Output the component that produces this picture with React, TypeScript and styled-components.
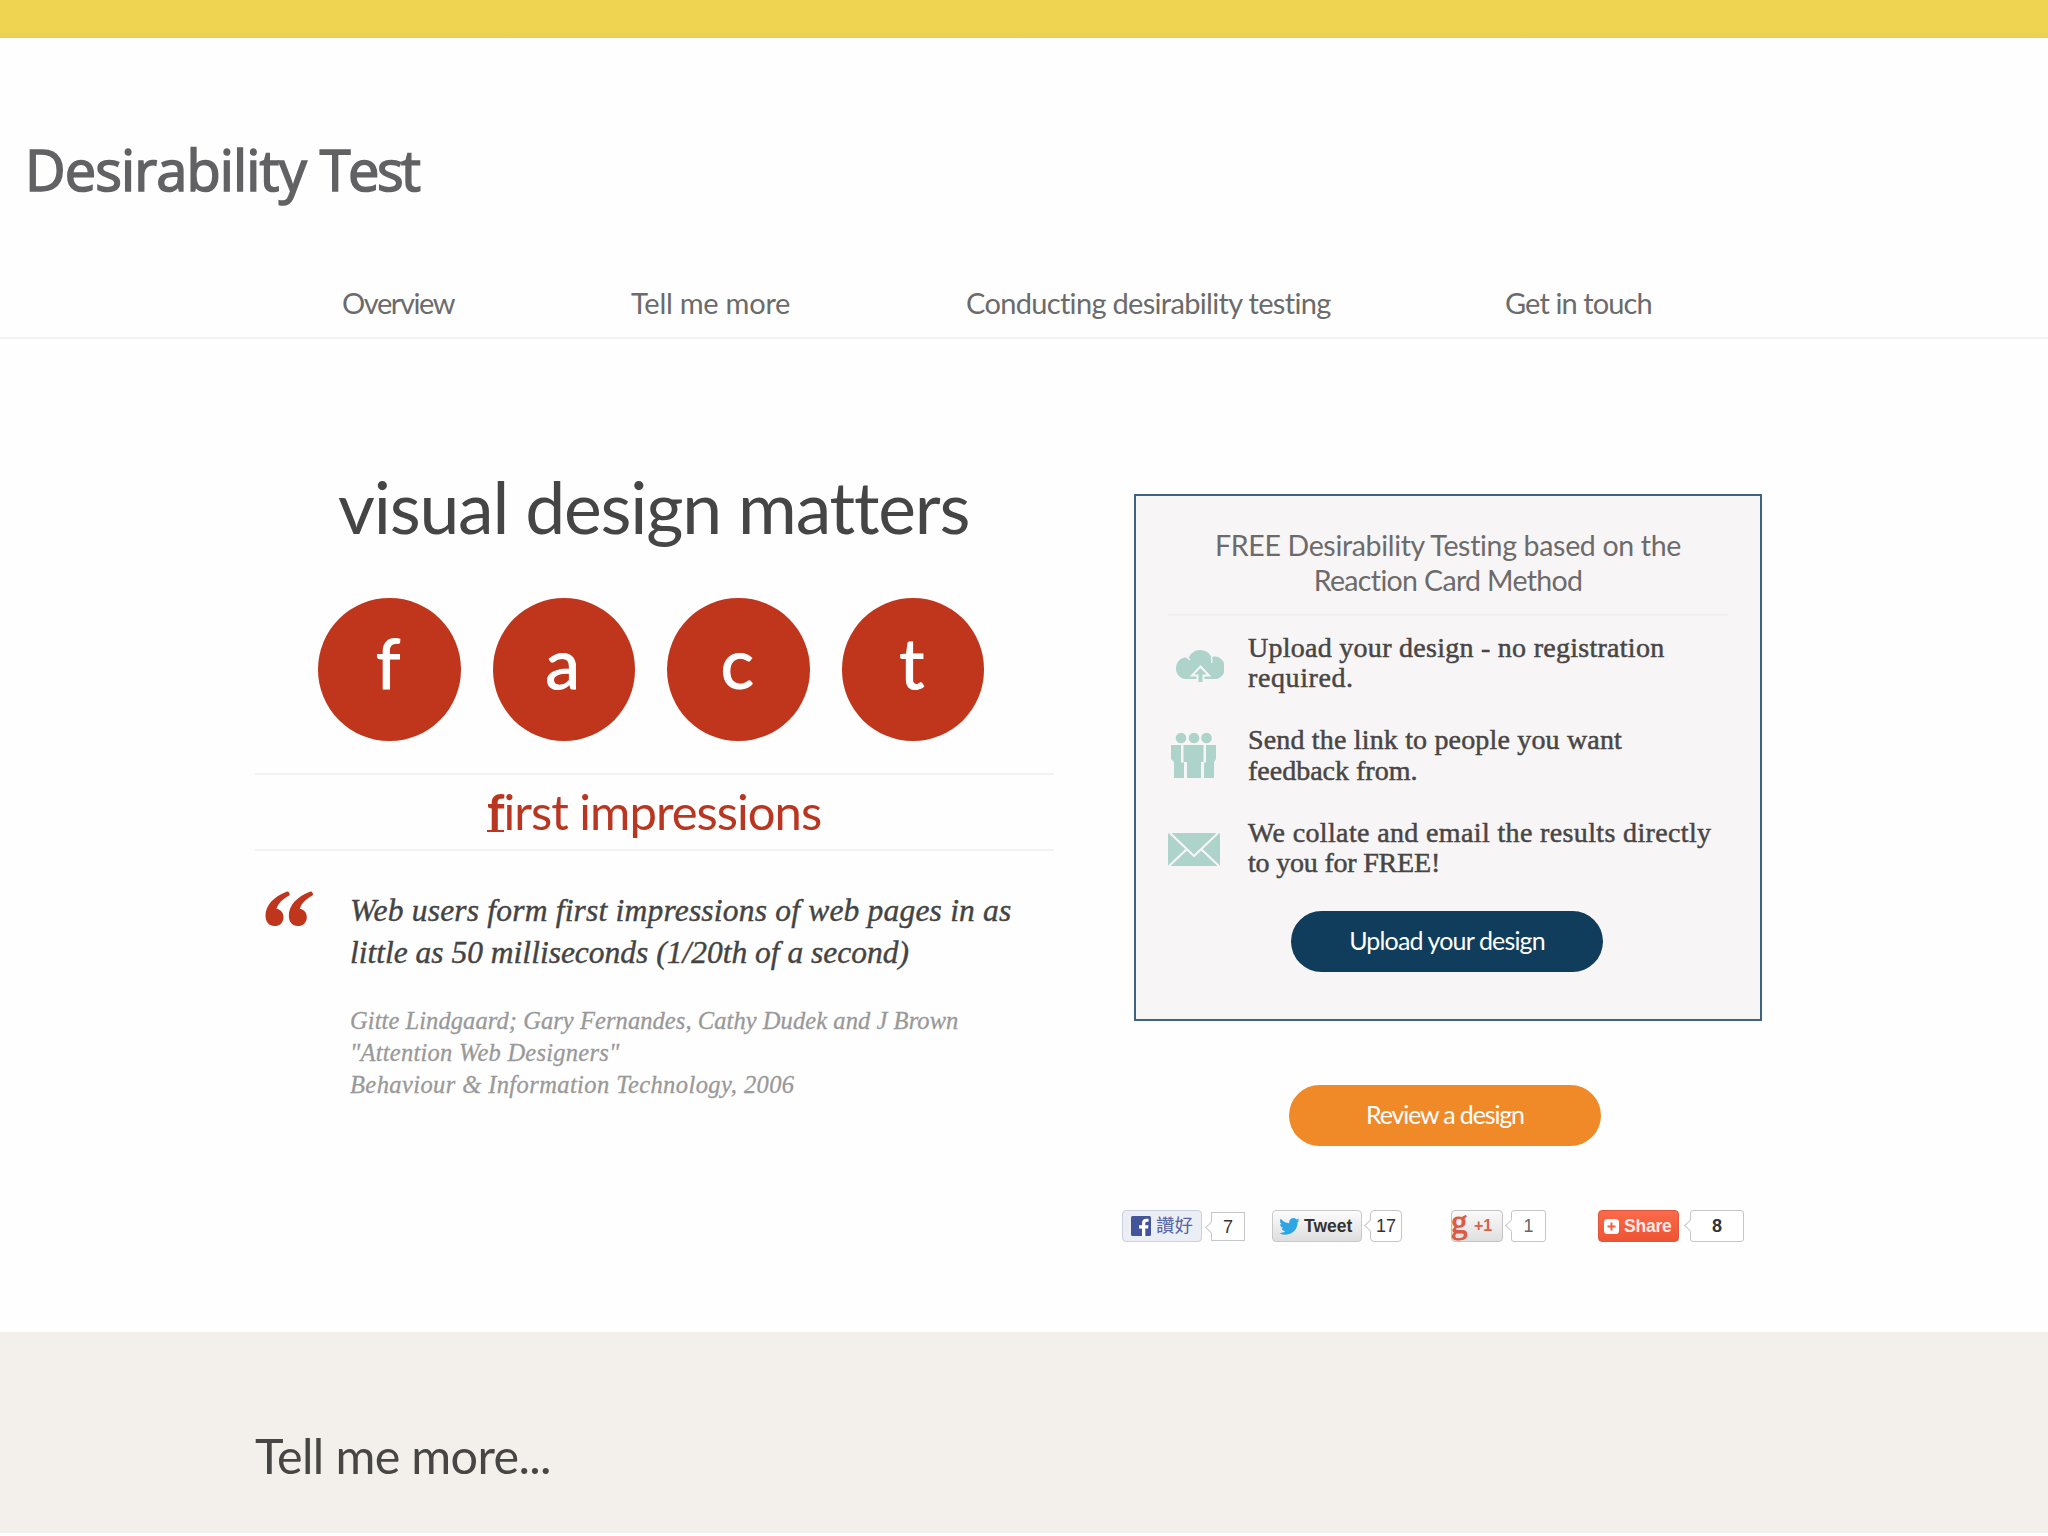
import React from 'react';
import styled, { createGlobalStyle } from 'styled-components';

const sans = 'Lato, "Open Sans", sans-serif';
const serif = '"Liberation Serif", Georgia, serif';
const ui = '"Liberation Sans", Arial, "Noto Sans CJK TC", sans-serif';

const Global = createGlobalStyle`
  body { margin: 0; background: #fefefe; }
  * { box-sizing: border-box; }
  h1, h2, h3, p, ul, blockquote { margin: 0; padding: 0; font-weight: 400; }
`;

const Page = styled.div`
  width: 2048px;
  height: 1536px;
  overflow: hidden;
  display: flex;
  flex-direction: column;
  background: #fefefe;
  color: #444;
  font-family: ${sans};
  font-variant-ligatures: none;
`;

const TopBar = styled.div`
  height: 38px;
  flex: none;
  background: linear-gradient(#efd452 80%, #e9d052);
`;

const Line = styled.span<{ $ls?: number }>`
  display: block;
  white-space: nowrap;
  letter-spacing: ${p => p.$ls ?? 0}px;
`;

const Title = styled.h1`
  flex: none;
  height: 236px;
  padding: 96px 0 0 25px;
  display: flex;
  gap: 14px;
  font: 400 56px/70px "Open Sans", sans-serif;
  color: #626164;
  -webkit-text-stroke: 1.6px #626164;
`;

const Nav = styled.nav`
  flex: none;
  height: 65px;
  padding-left: 342px;
  display: flex;
  border-bottom: 2px solid #f2f2f2;
  font-size: 29px;
  line-height: 58px;
  color: #6b6b6b;
`;

const NavItem = styled.a<{ $w: number }>`
  width: ${p => p.$w}px;
  flex: none;
`;

const Main = styled.main`
  flex: none;
  height: 993px;
  padding-left: 255px;
  display: flex;
`;

const Left = styled.section`
  width: 799px;
  margin-right: 80px;
  padding-top: 122px;
  display: flex;
  flex-direction: column;
`;

const Headline = styled.h2`
  padding-left: 83px;
  font-size: 71.5px;
  line-height: 90px;
  color: #454545;
`;

const Circles = styled.div`
  display: flex;
  gap: 32px;
  margin: 47px 0 0 63px;
`;

const Circle = styled.div`
  width: 142.5px;
  height: 143px;
  padding-right: 2px;
  border-radius: 50%;
  background: #bf361d;
  color: #fff;
  font-size: 70px;
  line-height: 128px;
  text-align: center;
  -webkit-text-stroke: 1px #fff;
`;

const Strap = styled.h3`
  margin-top: 32px;
  height: 78px;
  border: solid #f3f1f4;
  border-width: 2px 0;
  padding-left: 232px;
  font-size: 49px;
  line-height: 73px;
  color: #b93620;
  b {
    display: inline-block;
    height: 57px;
    line-height: 73px;
    border-bottom: 2px solid #b93620;
    vertical-align: top;
  }
`;

const Quote = styled.blockquote`
  display: flex;
  padding: 39px 0 0 10px;
`;

const QuoteMark = styled.svg`
  width: 49px;
  height: 37px;
  margin-right: 36px;
`;

const QuoteText = styled.p`
  font: italic 31.5px/41.5px ${serif};
  color: #444;
  -webkit-text-stroke: 0.4px #444;
`;

const Cite = styled.p`
  margin-top: 32px;
  font: italic 24.5px/32px ${serif};
  color: #999;
  -webkit-text-stroke: 0.3px #999;
`;

const Right = styled.aside`
  width: 650px;
  padding-top: 155px;
  display: flex;
  flex-direction: column;
`;

const Card = styled.section`
  width: 628px;
  height: 527px;
  border: 2px solid #3f627e;
  background: #f8f5f6;
  display: flex;
  flex-direction: column;
  padding: 32px 32px 0;
`;

const CardHead = styled.h3`
  height: 88px;
  border-bottom: 2px solid #f1eff0;
  display: flex;
  flex-direction: column;
  align-items: center;
  font-size: 28.5px;
  line-height: 35px;
  color: #6c6b6b;
`;

const Steps = styled.ul`
  list-style: none;
  display: flex;
  flex-direction: column;
  padding-top: 16.5px;
`;

const Step = styled.li`
  height: 92.7px;
  display: flex;
  font: 28px/30.5px ${serif};
  color: #484645;
  -webkit-text-stroke: 0.5px #484645;
`;

const StepIcon = styled.svg`
  flex: none;
  width: 56px;
  height: 60px;
  margin-right: 24px;
`;

const Button = styled.a<{ $bg: string }>`
  width: 312px;
  height: 61px;
  flex: none;
  border-radius: 31px;
  background: ${p => p.$bg};
  color: #fff;
  font-size: 25px;
  line-height: 59px;
  display: flex;
  justify-content: center;
`;

const UploadSlot = styled.div`
  padding-left: 123px;
`;

const ReviewSlot = styled.div`
  padding: 64px 0 0 155px;
`;

const Social = styled.div`
  display: flex;
  margin: 64px 0 0 -12px;
  font-family: ${ui};
`;

const Widget = styled.div<{ $w: number }>`
  width: ${p => p.$w}px;
  flex: none;
  display: flex;
`;

const Badge = styled.div<{ $w: number; $bg: string; $line: string; $pad: number }>`
  width: ${p => p.$w}px;
  height: 32px;
  flex: none;
  display: flex;
  align-items: center;
  padding-left: ${p => p.$pad}px;
  border: 1.5px solid ${p => p.$line};
  border-radius: 4px;
  background: ${p => p.$bg};
`;

const BadgeText = styled.span<{ $c: string; $s: number; $ml: number; $b?: boolean; $ls?: number }>`
  margin-left: ${p => p.$ml}px;
  color: ${p => p.$c};
  font: ${p => (p.$b ? 700 : 400)} ${p => p.$s}px/28px ${ui};
  letter-spacing: ${p => p.$ls ?? 0}px;
  white-space: nowrap;
`;

const GMark = styled.span`
  width: 16px;
  height: 30px;
  margin-left: -1px;
  font: 400 33px/22px ${serif};
  color: #dc5a42;
  -webkit-text-stroke: 1px #dc5a42;
`;

const Bubble = styled.div<{ $w: number; $ml: number; $r: number; $c: string; $b?: boolean }>`
  position: relative;
  width: ${p => p.$w}px;
  height: ${p => (p.$r ? 32 : 29)}px;
  margin: ${p => (p.$r ? 0 : 1.5)}px 0 0 ${p => p.$ml}px;
  border: 1.5px solid #c6c6ca;
  border-radius: ${p => p.$r}px;
  background: #fff;
  color: ${p => p.$c};
  font: ${p => (p.$b ? 700 : 400)} 18px/${p => (p.$r ? 30 : 29)}px ${ui};
  text-align: center;
  &::before {
    content: '';
    position: absolute;
    left: -5px;
    top: 10px;
    width: 8px;
    height: 8px;
    border: solid #c6c6ca;
    border-width: 0 0 1.5px 1.5px;
    background: #fff;
    transform: rotate(45deg);
  }
`;

const More = styled.section`
  flex: none;
  height: 201px;
  padding: 93px 0 0 255px;
  background: #f3f0ec;
  font-size: 48.5px;
  line-height: 60px;
  color: #474644;
`;

const mint = '#add3ca';

const CloudIcon = () => (
  <StepIcon viewBox="0 0 56 60">
    <path d="M18 46c-5.500 0-10-4.500-10-10.500S12 24.500 18 24.500c1 0 1.800.1 2.600.4C22.500 20.300 26.800 17 32 17s9.500 3 11.500 7.200c1-.4 1.800-.6 3-.6C52.300 23.600 57 28.500 57 34.800S52.300 46 46.500 46Z" fill={mint} />
    <path d="M19.500 24.500c-1.300.6 1.500.8 2.500 2.500M43.200 24c.9 1.800 1 3.300.4 6" fill="none" stroke="#f8f5f6" strokeWidth="1.300" />
    <path d="M32.500 33.500l-8.500 9h5.500V50h6v-7.500H41Z" fill={mint} stroke="#f8f5f6" strokeWidth="2" />
  </StepIcon>
);

const PeopleIcon = () => (
  <StepIcon viewBox="0 0 56 60">
    <g fill={mint}>
      <circle cx="13" cy="13" r="5.300" />
      <circle cx="26" cy="13" r="5.300" />
      <circle cx="38.500" cy="13" r="5.300" />
      <path d="M3 20h10v17.500h3V53H6V37L3 34Z" />
      <path d="M15.500 20h20v17H33v16H19V37h-3.500Z" />
      <path d="M38 20h10v14l-2 3v16H36V37.500h2Z" />
    </g>
  </StepIcon>
);

const MailIcon = () => (
  <StepIcon viewBox="0 0 56 60">
    <rect x="0" y="15" width="52" height="33" rx="1.500" fill={mint} />
    <path d="M2 15l24 23 24-23M1 48l18-17M51 48L33 31" fill="none" stroke="#f8f5f6" strokeWidth="2.200" />
  </StepIcon>
);

const QuoteDrop = ({ x }: { x: number }) => (
  <path
    transform={`translate(${x} 0)`}
    d="M21.500 1.800c.9-.5 2-.2 2.500.6l.6 1.300c.3.800 0 1.500-.8 2C17.500 9 13 13.500 11.500 18.800c4 .6 7 3.700 7 8.400 0 5.300-3.700 8.800-9 8.800S.5 32 .5 25.500C.5 15.500 9 6.500 21.500 1.800Z"
    fill="#bf361d"
  />
);

const steps: { icon: React.ReactNode; lines: [string, number][] }[] = [
  { icon: <CloudIcon />, lines: [['Upload your design - no registration', 0.27], ['required.', 0.6]] },
  { icon: <PeopleIcon />, lines: [['Send the link to people you want', 0.17], ['feedback from.', 0]] },
  { icon: <MailIcon />, lines: [['We collate and email the results directly', 0.36], ['to you for FREE!', -0.2]] },
];

const nav: [string, number, number][] = [
  ['Overview', 289, -1.4],
  ['Tell me more', 335, -0.25],
  ['Conducting desirability testing', 539, -0.68],
  ['Get in touch', 160, -0.9],
];

export default function App() {
  return (
    <Page>
      <Global />
      <TopBar />
      <Title>
        <Line $ls={-0.9}>Desirability</Line>
        <Line $ls={-2.6}>Test</Line>
      </Title>
      <Nav>
        {nav.map(([t, w, ls]) => <NavItem key={t} $w={w}><Line $ls={ls}>{t}</Line></NavItem>)}
      </Nav>
      <Main>
        <Left>
          <Headline><Line $ls={-1.2}>visual design matters</Line></Headline>
          <Circles>
            {['f', 'a', 'c', 't'].map(c => <Circle key={c}>{c}</Circle>)}
          </Circles>
          <Strap><Line $ls={-1}><b>f</b>irst impressions</Line></Strap>
          <Quote>
            <QuoteMark viewBox="0 0 49 37">
              <QuoteDrop x={0} />
              <QuoteDrop x={23.3} />
            </QuoteMark>
            <div>
              <QuoteText>
                <Line $ls={0.2}>Web users form first impressions of web pages in as</Line>
                <Line $ls={0}>little as 50 milliseconds (1/20th of a second)</Line>
              </QuoteText>
              <Cite>
                <Line $ls={0.07}>Gitte Lindgaard; Gary Fernandes, Cathy Dudek and J Brown</Line>
                <Line $ls={0.25}>"Attention Web Designers"</Line>
                <Line $ls={0.4}>Behaviour &amp; Information Technology, 2006</Line>
              </Cite>
            </div>
          </Quote>
        </Left>
        <Right>
          <Card>
            <CardHead>
              <Line $ls={-0.32}>FREE Desirability Testing based on the</Line>
              <Line $ls={-0.65}>Reaction Card Method</Line>
            </CardHead>
            <Steps>
              {steps.map((s, i) => (
                <Step key={i}>
                  {s.icon}
                  <div>{s.lines.map(([t, ls]) => <Line key={t} $ls={ls}>{t}</Line>)}</div>
                </Step>
              ))}
            </Steps>
            <UploadSlot><Button $bg="#103d5b"><Line $ls={-0.85}>Upload your design</Line></Button></UploadSlot>
          </Card>
          <ReviewSlot><Button $bg="#f08a29"><Line $ls={-1.15}>Review a design</Line></Button></ReviewSlot>
          <Social>
            <Widget $w={150}>
              <Badge $w={80} $bg="#eceef6" $line="#cccfe0" $pad={8}>
                <svg width="20" height="20" viewBox="0 0 20 20">
                  <rect width="20" height="20" rx="1.500" fill="#43549b" />
                  <path d="M11 20v-7.500H8V9.300h3V7.200C11 4.200 12.700 2.800 15.400 2.800c1 0 1.900.1 2.200.1v2.900h-1.500c-1.500 0-1.800.7-1.800 1.800v1.700h3.200l-.4 3.200h-2.800V20Z" fill="#fff" />
                </svg>
                <BadgeText $c="#5563a8" $s={18.5} $ml={5}>讚好</BadgeText>
              </Badge>
              <Bubble $w={34} $ml={9} $r={0} $c="#333">7</Bubble>
            </Widget>
            <Widget $w={179}>
              <Badge $w={90} $bg="linear-gradient(#fcfcfc, #dedede)" $line="#c9c9cb" $pad={6}>
                <svg width="21" height="17" viewBox="0 0 24 20">
                  <path d="M24 2.400a9.800 9.800 0 0 1-2.800.8A4.900 4.900 0 0 0 23.300.5a9.900 9.900 0 0 1-3.100 1.200 4.900 4.900 0 0 0-8.400 4.500A14 14 0 0 1 1.700 1a4.900 4.900 0 0 0 1.500 6.600A4.900 4.900 0 0 1 1 7v.1a4.900 4.900 0 0 0 3.900 4.800 4.900 4.900 0 0 1-2.200.1 4.900 4.900 0 0 0 4.600 3.400A9.900 9.900 0 0 1 0 17.500a14 14 0 0 0 7.500 2.200c9.100 0 14-7.500 14-14v-.6A10 10 0 0 0 24 2.400Z" fill="#2fa6e4" />
                </svg>
                <BadgeText $c="#333" $s={17.5} $ml={4} $b>Tweet</BadgeText>
              </Badge>
              <Bubble $w={32} $ml={8} $r={4} $c="#333">17</Bubble>
            </Widget>
            <Widget $w={147}>
              <Badge $w={52} $bg="linear-gradient(#fafafa, #dfdfdf)" $line="#c3c3c3" $pad={0}>
                <GMark>g</GMark>
                <BadgeText $c="#d9604c" $s={16} $ml={7} $b>+1</BadgeText>
              </Badge>
              <Bubble $w={35} $ml={8} $r={3} $c="#666">1</Bubble>
            </Widget>
            <Widget $w={150}>
              <Badge $w={81} $bg="linear-gradient(#fa6a4a, #ee5433)" $line="#e0563a" $pad={5}>
                <svg width="15" height="15" viewBox="0 0 15 15">
                  <rect width="15" height="15" rx="3.500" fill="#fff" />
                  <path d="M7.500 3.500v8M3.500 7.500h8" stroke="#f26040" strokeWidth="2" />
                </svg>
                <BadgeText $c="#ffe9e2" $s={17.5} $ml={5} $b $ls={-0.2}>Share</BadgeText>
              </Badge>
              <Bubble $w={54} $ml={11} $r={3} $c="#333" $b>8</Bubble>
            </Widget>
          </Social>
        </Right>
      </Main>
      <More><Line $ls={-0.65}>Tell me more...</Line></More>
    </Page>
  );
}
